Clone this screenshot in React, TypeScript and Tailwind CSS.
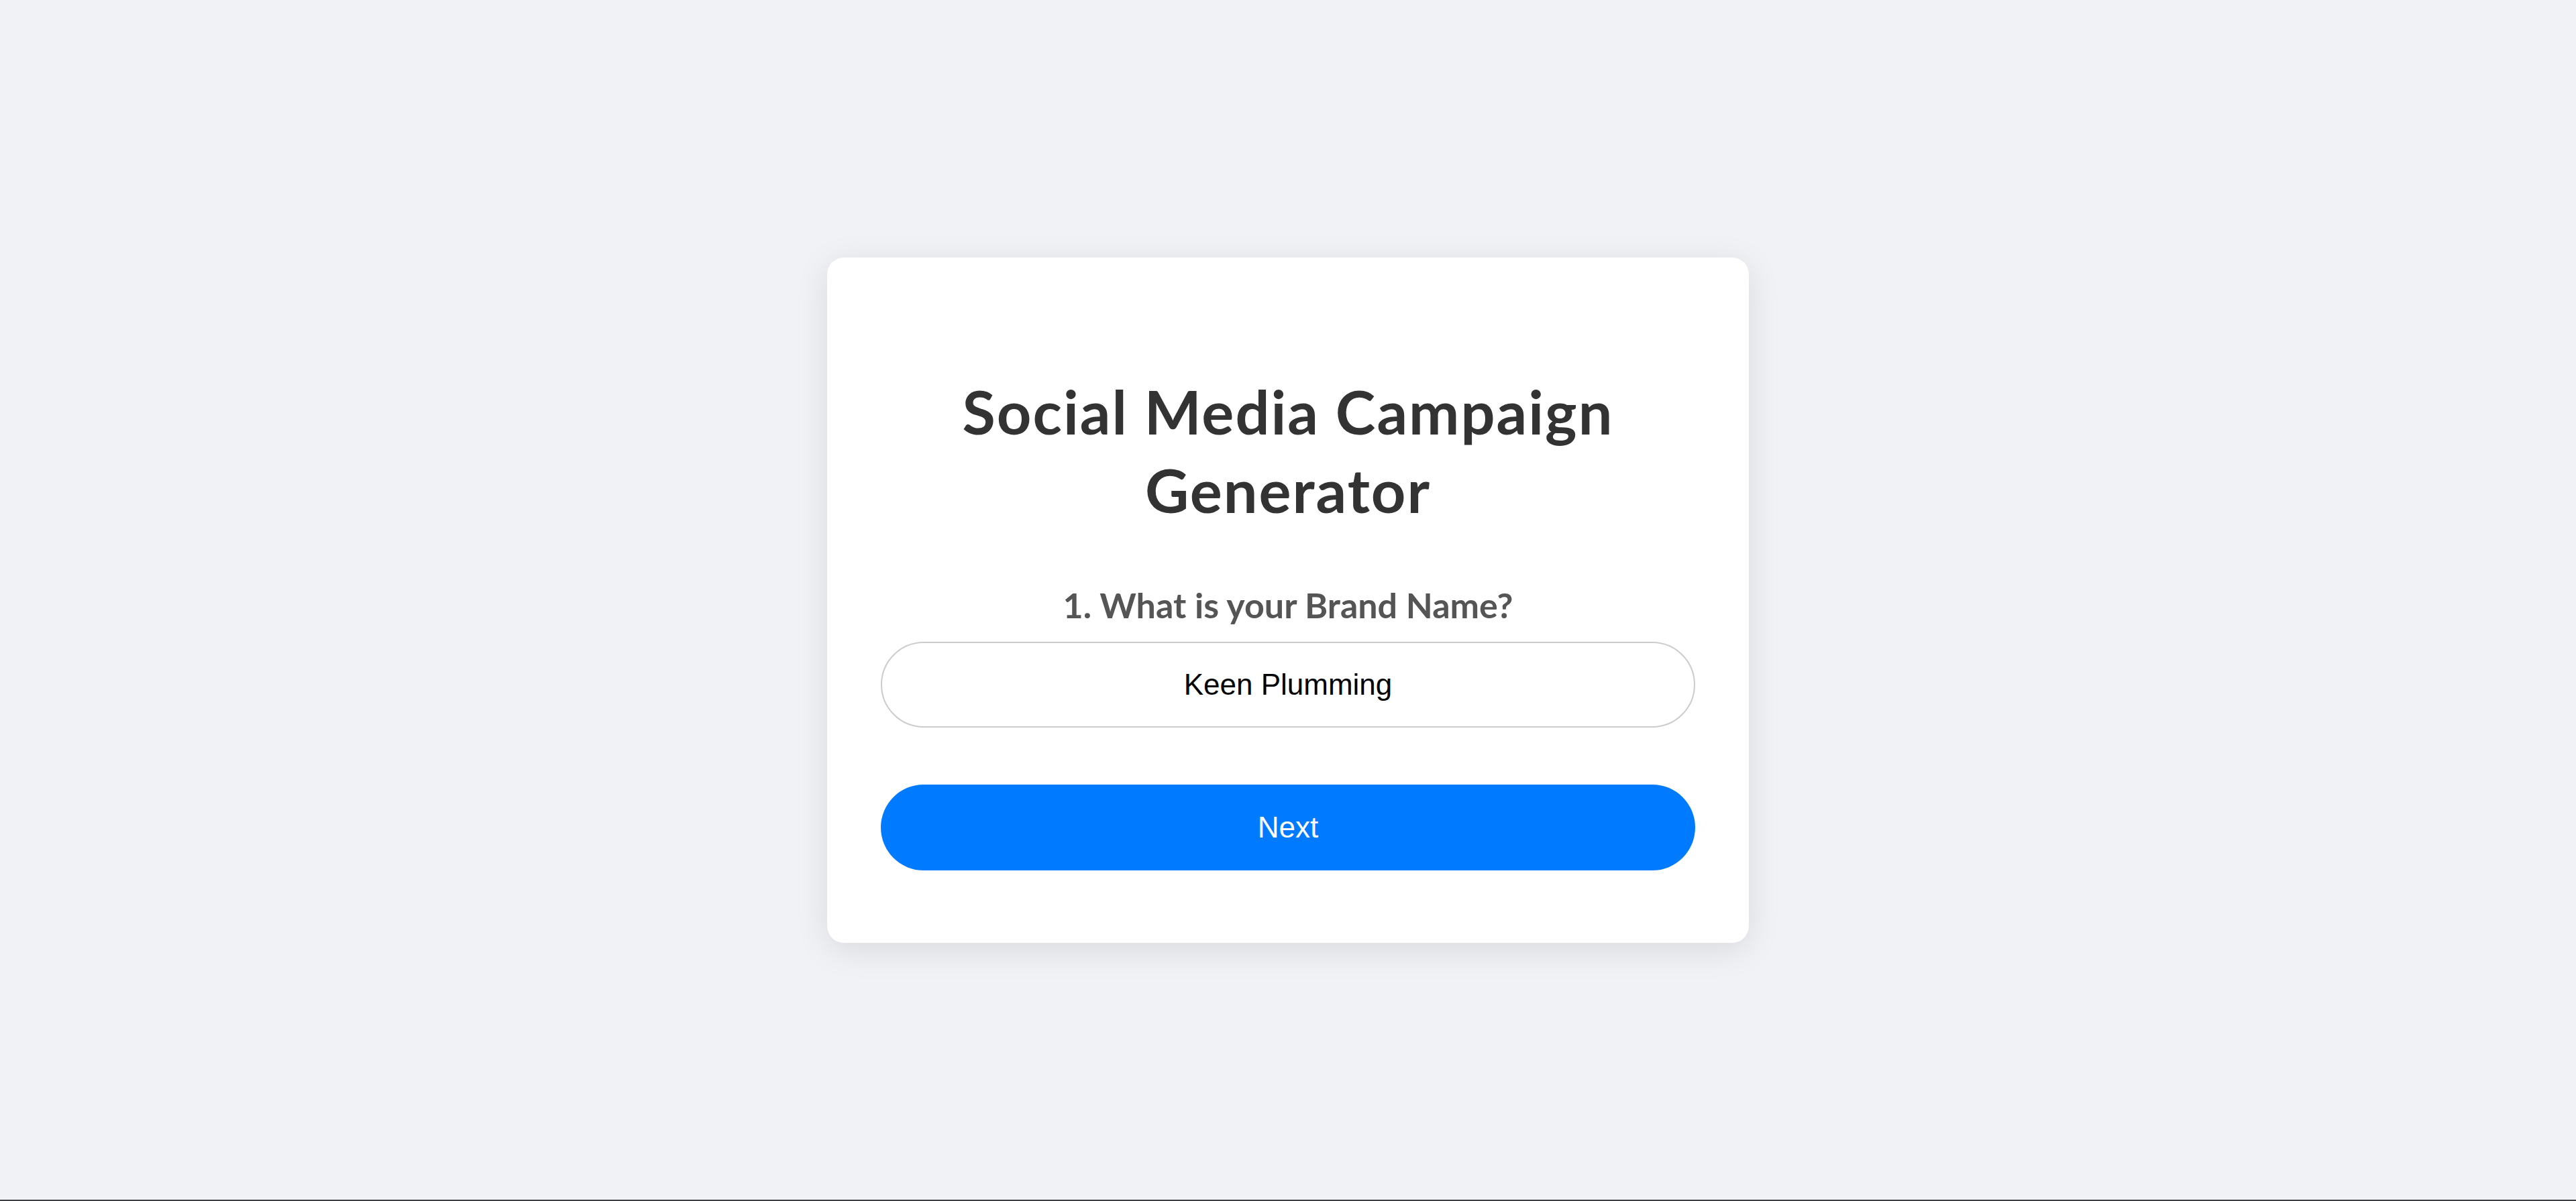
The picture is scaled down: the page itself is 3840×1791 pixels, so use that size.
export default function App() {
  return (
    <div className="w-full bg-[#f0f2f5]" style={{ fontFamily: 'Lato, "Noto Sans", sans-serif' }}>
      <div className="h-[1789px] flex items-center justify-center">
        <div className="w-[1374px] bg-white rounded-[25px] shadow-[0_10px_50px_rgba(0,0,0,0.1)] px-[80px] pt-[171px] pb-[108px] flex flex-col">
          <h1 className="text-[90px] leading-[117px] font-bold tracking-[2px] text-[#333] text-center">
            Social Media Campaign Generator
          </h1>
          <label className="mt-[78px] text-[52px] leading-[70px] font-bold text-[#555] text-center">
            1. What is your Brand Name?
          </label>
          <input
            type="text"
            defaultValue="Keen Plumming"
            className="mt-[20px] h-[128px] w-full rounded-full border-[2.5px] border-[#ccc] bg-white text-center text-[44px] text-black outline-none"
            style={{ fontFamily: '"Liberation Sans", Arial, sans-serif' }}
          />
          <button
            className="mt-[85px] h-[128px] w-full rounded-full bg-[#007bff] text-white text-[44px]"
            style={{ fontFamily: '"Liberation Sans", Arial, sans-serif' }}
          >
            Next
          </button>
        </div>
      </div>
      <div className="h-[2px] bg-[#3c3f44]" />
    </div>
  );
}
